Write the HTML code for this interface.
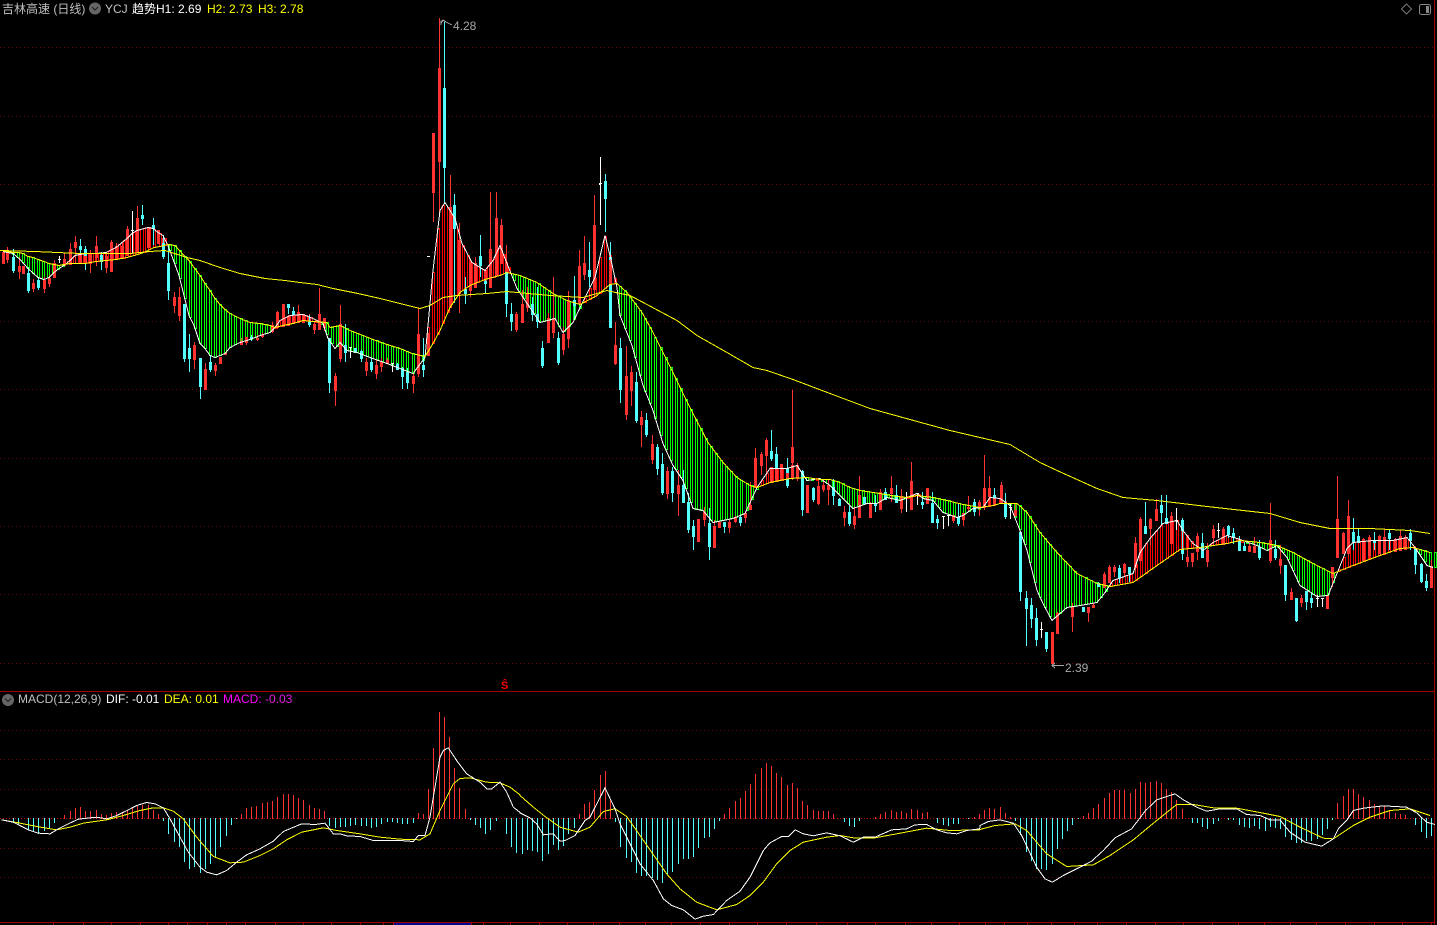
<!DOCTYPE html>
<html><head><meta charset="utf-8"><title>吉林高速 (日线)</title>
<style>
html,body{margin:0;padding:0;background:#000;width:1437px;height:925px;overflow:hidden}
#w{position:relative;width:1437px;height:925px;background:#000;overflow:hidden}
svg{position:absolute;left:0;top:0}
.t{position:absolute;font:12px/14px "Liberation Sans","Noto Sans CJK SC",sans-serif;white-space:pre;color:#c0c0c0}
</style></head><body><div id="w">
<svg id="s" width="1437" height="925" viewBox="0 0 1437 925" shape-rendering="crispEdges" xmlns="http://www.w3.org/2000/svg"></svg>
<div class="t" style="left:2px;top:2px">吉林高速 (日线)</div>
<div class="t" style="left:105px;top:2px">YCJ</div>
<div class="t" style="left:132px;top:2px;color:#fff">趋势H1: 2.69</div>
<div class="t" style="left:207px;top:2px;color:#ff0">H2: 2.73</div>
<div class="t" style="left:258px;top:2px;color:#ff0">H3: 2.78</div>
<div class="t" style="left:453px;top:19px;color:#a8a8a8">4.28</div>
<div class="t" style="left:1065px;top:661px;color:#a8a8a8">2.39</div>
<div class="t" style="left:18px;top:692px">MACD(12,26,9)</div>
<div class="t" style="left:106px;top:692px;color:#fff">DIF: -0.01</div>
<div class="t" style="left:164px;top:692px;color:#ff0">DEA: 0.01</div>
<div class="t" style="left:223px;top:692px;color:#f0f">MACD: <span style="color:#e020e0">-0.03</span></div>
<div class="t" style="left:501px;top:679px;color:#f00;font-size:11px;font-weight:bold">Ŝ</div>
</div>
<script>
var NS="http://www.w3.org/2000/svg",S=document.getElementById("s");
function el(n,a){var e=document.createElementNS(NS,n);for(var k in a)e.setAttribute(k,a[k]);S.appendChild(e);return e}
function line(x1,y1,x2,y2,c,o){var a={x1:x1,y1:y1,x2:x2,y2:y2,stroke:c,"stroke-width":1};if(o)for(var k in o)a[k]=o[k];return el("line",a)}
var RED="#ff3232",CY="#54ffff";

/* grid: individual pixel dots via dash, unsnapped */
var dots={"stroke-dasharray":"1 3","shape-rendering":"geometricPrecision"};
[47.5,116.5,184.5,252.5,321.5,389.5,458.5,526.5,594.5,663.5].forEach(function(y){line(0,y,1434,y,"#640606",dots)});
[730.5,759.5,789.5,848.5,877.5].forEach(function(y){line(0,y,1434,y,"#640606",dots)});
line(0,818.5,1434,818.5,"#b00e0e",{"stroke-dasharray":"1 2","shape-rendering":"geometricPrecision"});
line(0,691.5,1435,691.5,"#a00000");
line(0,922.5,1435,922.5,"#a00000");
line(1434.5,0,1434.5,925,"#a00000");
el("rect",{x:393,y:923,width:78,height:2,fill:"#00008b"});
el("rect",{x:1435,y:552,width:2,height:15,fill:"#00008b"});
[53,83,111,140,168,187,207,226,245,275,303,331,360,383,393,471,483,510,539,567,593,619,645,671,700,729,757,786,816,847,875,905,931,959,985,1004,1027,1051,1074,1097,1126,1155,1183,1212,1238,1264,1290,1316,1345,1374,1402,1431].forEach(function(x){line(x+.5,923,x+.5,925,"#a00000")});

/* ribbon */
function pts(s){return s.trim().split(/\s+/).map(function(p){return p.split(",").map(Number)})}
var F=pts("3,251 13,253 20,259 28,268 38,277 44,279 49,277 54,272 59,268 64,265 70,260 75,255 85,253 96,253 106,252 116,247 127,238 132,233 137,230 148,227 153,228 158,232 163,235 168,245 179,275 189,315 194,325 200,343 205,348 210,355 215,357 225,353 230,347 240,342 250,339 260,335 270,332 275,327 280,320 290,315 303,314 313,318 323,323 328,338 335,348 340,342 347,350 357,352 370,357 387,363 400,368 413,373 425,357 430,303 433,270 440,210 445,202 455,218 462,243 472,262 485,270 493,260 500,245 507,263 517,288 540,322 555,318 563,332 573,322 582,303 595,277 605,235 610,255 617,287 620,315 632,345 643,385 653,410 663,443 673,465 683,480 693,508 703,510 713,522 733,518 745,513 757,487 770,468 787,468 797,465 807,480 820,478 830,485 840,495 853,508 867,503 877,503 887,497 900,500 907,497 917,493 923,498 933,500 943,512 957,517 963,515 973,508 983,507 990,497 1000,498 1010,505 1020,530 1027,550 1037,590 1043,603 1052,620 1067,607 1080,605 1097,602 1105,592 1113,580 1133,573 1140,552 1150,538 1163,523 1177,520 1183,530 1193,543 1203,550 1213,542 1227,535 1237,538 1257,545 1267,550 1277,545 1287,557 1300,585 1317,596 1328,595 1337,573 1347,548 1353,542 1373,540 1393,540 1407,537 1415,547 1427,565 1433,567");
var L=pts("2,250 13,252 18,252 23,253 28,256 33,257 38,259 44,261 49,263 54,264 59,265 64,264 70,263 85,263 96,261 106,260 116,259 127,257 134,255 141,253 148,250 154,247 160,246 168,244 175,245 184,255 189,260 194,267 200,275 205,283 210,290 215,298 220,304 225,309 230,313 240,318 250,322 260,323 270,325 275,327 283,325 293,323 303,320 313,321 327,322 330,327 340,325 350,330 363,335 373,339 387,344 400,348 412,353 425,356 433,343 440,330 450,307 460,292 470,285 485,279 500,275 507,272 520,275 537,282 553,293 567,300 580,304 597,295 610,284 617,283 627,292 642,312 652,330 662,350 673,372 683,393 693,413 708,442 723,462 737,477 750,485 757,487 770,482 790,478 807,477 820,479 830,479 840,482 850,487 860,490 880,493 897,496 907,497 917,495 933,497 947,500 963,504 980,507 993,505 1000,503 1017,503 1027,512 1040,532 1057,552 1077,573 1097,583 1110,586 1133,582 1157,565 1180,549 1200,547 1227,543 1240,540 1260,542 1277,545 1293,552 1313,563 1333,573 1353,565 1380,555 1400,548 1413,547 1430,552");
var M=pts("0,250 35,251 80,253 130,253 150,251 165,250 187,257 200,260 220,267 240,273 250,275 265,278 285,280 300,282 317,284 333,288 358,293 380,298 400,303 420,308 430,305 443,297 457,295 487,293 507,291 517,292 550,295 583,297 607,290 620,293 630,295 647,304 677,320 697,335 727,352 753,367 767,370 793,379 830,393 870,408 950,430 1010,444 1040,462 1057,470 1097,488 1123,497 1157,500 1207,506 1270,513 1300,522 1330,528 1370,528 1410,530 1430,533");
function at(a,x){for(var i=1;i<a.length;i++)if(x<=a[i][0]){var p=a[i-1],q=a[i];return p[1]+(q[1]-p[1])*(x-p[0])/(q[0]-p[0])}return a[a.length-1][1]}
for(var n=2;n<284;n++){var cx=2.7+5.06*n,px=Math.round(cx),fy=at(F,cx),sy=at(L,cx);
 var ty=Math.round(Math.min(fy,sy)),by=Math.round(Math.max(fy,sy));if(by-ty<2)by=ty+2;
 el("rect",{x:px-.5,y:ty+.5,width:2,height:by-ty,fill:"#000",stroke:fy>sy?"#00ff00":"#ff0000","stroke-width":1});}

/* candles */
function cs(ox,oy,d){d.trim().split("|").forEach(function(r){var a=r.trim().split(/\s+/);if(a.length<6)return;
 var t=a[0],x=Math.round(ox+a[1]/3),h=Math.round(oy+a[2]/3),T=Math.round(oy+a[3]/3),B=Math.round(oy+a[4]/3),l=Math.round(oy+a[5]/3);
 var c=t=="r"?RED:t=="c"?CY:"#fff";
 if(l>h)line(x+.5,h,x+.5,l,c);
 if(t=="r"&&B>T)el("rect",{x:x-.5,y:T+.5,width:2,height:B-T,fill:"none",stroke:c,"stroke-width":1});
 if(t=="c"&&B>T)el("rect",{x:x-1,y:T,width:3,height:B-T+1,fill:c});
 if(t=="w")line(x-1,T+.5,x+2,T+.5,c);
})}
cs(0,200,"r 8 155 155 190 190|r 22 142 150 178 188|c 38 148 170 210 218|r 56 170 198 212 238|r 70 198 198 220 220|c 85 200 218 270 278|r 100 238 248 263 275|c 115 230 240 262 270|r 133 230 240 263 278|r 148 225 233 250 260|r 163 180 190 230 230|w 178 168 178 190 190|r 193 160 178 195 195|r 211 130 148 192 192|r 226 108 127 140 190|c 241 118 138 148 160|r 241 160 162 188 188|c 256 138 148 165 210|r 256 168 168 188 188|r 271 150 158 190 218|r 289 108 138 170 198|c 304 155 165 183 210|r 319 155 168 200 218|r 334 120 127 212 212|r 349 130 138 178 178|r 367 130 138 172 172|r 382 78 88 165 165|w 397 32 90 160 160|r 412 18 55 155 155|c 427 15 45 53 75|r 445 82 82 142 142|c 460 55 75 85 135|r 475 90 90 130 130|r 490 105 115 130 130|c 490 105 130 168 178|c 505 135 190 270 300|r 523 275 292 315 340|r 538 262 292 345 362|c 553 312 312 474 486|c 568 402 444 474 516|r 583 426 435 476 508|c 601 474 474 558 596|r 616 490 508 568 568|c 631 465 486 508 516|r 646 488 495 510 528|r 661 470 470 488 488|r 676 455 458 463 463");
cs(230,270,"r 33 205 212 222 225|r 48 200 202 215 225|c 63 195 200 205 213|r 81 195 203 208 213|r 97 190 195 198 205|r 127 155 165 182 190|r 142 123 125 170 172|r 160 102 102 168 168|c 175 102 102 110 132|r 175 135 137 165 165|c 190 112 124 132 160|r 190 135 137 160 162|r 205 105 125 157 158|r 220 132 133 155 155|r 238 132 142 155 158|c 238 135 155 162 172|r 253 155 163 178 192|r 268 55 133 176 178|r 283 145 145 172 182|c 298 205 205 335 368|r 316 310 318 360 408|r 331 105 163 265 275|c 346 162 225 247 275|w 361 232 232 263 263|c 376 235 235 247 247|c 394 240 242 263 275|r 409 265 277 300 318|c 424 265 277 298 305|r 439 270 285 310 327|r 454 265 277 288 305|r 472 265 270 278 280|w 487 278 280 305 305|c 502 280 283 297 297|c 517 290 295 318 358|c 532 295 305 335 358|r 550 310 318 338 368");
cs(400,10,"r 55 895 972 1090 1100|c 70 985 1065 1077 1100|r 85 970 970 1035 1035|r 100 370 370 545 635|r 117 25 175 452 620|c 133 35 235 470 575|r 149 495 590 890 890|c 163 552 585 655 880|r 178 640 690 850 910|c 196 800 837 850 882|r 211 750 755 840 860|r 226 740 760 832 832|c 241 675 738 765 800|r 256 780 780 810 812|c 256 810 812 820 848|r 271 545 718 832 832|r 289 546 625 795 795|r 304 627 645 760 760|r 319 705 755 785 785|c 319 785 785 880 920|c 334 880 912 933 962|r 349 905 912 958 965|r 367 840 883 935 935|r 382 830 850 892 905|c 397 860 882 912 932|c 412 830 912 933 955|c 427 993 1015 1065 1075|r 445 910 925 995 995|r 460 800 925 965 985|c 475 965 985 1055 1065|r 490 950 972 1017 1035|r 505 843 870 985 1015|c 523 798 870 885 930|r 538 720 768 880 885|r 553 678 760 792 810|c 568 697 780 798 830|r 583 555 645 838 865|w 601 440 520 523 645|c 616 492 513 563 665|c 631 695 740 748 800|r 631 745 750 825 825|c 631 822 822 952 952");
cs(610,280,"r 16 125 195 250 255|c 31 175 205 327 370|r 49 198 288 402 420|r 64 258 277 330 378|c 79 275 305 420 430|r 94 392 412 431 500|c 109 400 420 462 470|r 127 465 492 537 552|c 142 492 500 563 585|c 157 520 552 636 645|r 172 560 573 638 657|c 187 562 573 636 665|r 205 570 615 638 708|c 220 570 615 666 670|c 235 640 665 747 760|c 250 720 738 768 810|r 265 717 717 782 782|r 283 680 696 718 738|c 298 685 728 798 840|r 313 720 737 800 800|r 328 725 725 742 745|c 343 725 725 738 760|r 358 720 725 740 760|r 376 708 712 722 730|c 391 705 712 725 738|r 406 700 700 710 728|r 421 605 675 688 690|r 436 505 535 620 620|r 454 515 522 555 585|r 469 475 480 525 600|c 484 450 513 535 542|c 499 500 522 563 585|r 484 560 560 606 606|r 499 563 565 603 606|r 514 552 553 598 598|r 532 540 572 598 602|c 532 535 565 575 575|c 532 598 598 615 623|r 547 330 502 545 600|r 547 555 555 590 590|r 562 548 558 590 603|c 577 570 573 687 707|r 592 615 615 697 697|c 610 620 623 657 665|r 625 595 617 668 675");
cs(820,440,"r 10 118 135 146 155|r 25 118 135 146 195|c 40 118 142 164 195|c 58 175 178 194 194|r 73 198 216 230 258|c 88 198 216 248 258|r 103 200 228 252 267|r 118 108 165 230 230|c 133 170 170 188 190|r 151 185 192 230 230|c 166 165 190 195 215|r 181 148 155 208 208|c 196 145 155 178 178|r 214 108 144 158 186|c 229 135 165 186 186|r 244 148 168 205 218|w 259 155 170 170 215|r 274 66 124 208 208|w 292 158 158 170 195|c 307 155 185 193 207|r 322 145 145 190 193|c 337 155 190 247 250|c 352 225 237 247 267|w 370 228 228 260 267|w 385 225 225 255 258|r 400 225 225 240 250|c 415 190 230 250 257|r 430 220 220 238 258|r 445 168 200 205 215|c 463 178 187 212 228|r 478 180 187 198 228|r 493 45 145 198 210|r 508 108 145 168 198|c 523 145 165 173 198|r 523 175 175 195 198");
cs(1000,470,"r 2 35 45 100 102|c 16 68 100 137 147|w 31 100 110 110 148|r 46 100 120 135 140|c 61 185 185 362 392|c 79 362 385 415 527|c 94 385 405 445 475|c 109 415 445 507 527|w 124 457 478 478 505|c 139 487 487 535 547|r 157 487 487 580 580|r 172 425 430 488 488|r 217 400 410 437 486|c 250 410 412 423 423|r 265 410 410 425 455|r 280 400 405 410 415|c 295 335 340 348 350|r 313 305 312 350 350|r 328 285 290 335 335|r 343 285 290 303 320|c 358 285 293 320 340|r 373 280 283 305 320|c 388 290 292 310 335|r 406 200 220 290 308|r 421 140 148 270 270|c 436 95 168 190 190|r 451 145 148 175 225|r 469 88 118 150 150|c 484 75 105 125 165|c 499 75 145 160 162|r 514 125 138 220 220|w 529 115 150 150 180|c 547 145 150 180 270|c 547 238 238 248 270|r 562 200 262 272 290|r 577 248 250 272 290|r 592 190 198 243 270|c 607 190 218 260 262|r 622 218 240 272 290|r 640 165 178 200 228|w 655 160 180 180 205|r 670 170 178 222 225|c 685 165 168 192 205|c 700 175 190 200 222|c 718 198 212 240 240|c 733 215 228 240 240|r 748 220 228 243 243|r 763 200 228 247 250|c 778 210 230 260 270|r 811 100 210 270 280|c 826 210 238 262 270|r 841 225 268 285 312|c 856 285 285 373 392|r 874 355 365 387 387|c 889 385 385 450 455|r 904 375 385 397 410|c 919 362 362 392 420|c 934 370 385 397 415|w 952 375 385 385 412|w 967 385 385 385 412|r 982 375 375 415 415|r 997 290 292 320 350|r 1012 18 148 260 260|r 1030 185 188 250 250|r 1045 90 138 250 260|c 1060 145 185 212 240|c 1075 175 198 215 215|r 1090 205 207 270 270|r 1108 195 200 255 270|c 1123 185 210 215 240|r 1138 195 198 250 250|r 1153 178 200 250 250|c 1168 178 190 205 240|r 1186 205 208 243 245|r 1201 180 198 240 240|r 1216 195 200 238 240|c 1231 178 188 210 240|c 1246 235 235 282 312|c 1264 280 282 332 340|c 1279 312 332 350 362|r 1294 270 288 352 352");
line(427,256.5,430,256.5,"#fff");line(599,184.5,601,184.5,"#fff");

/* main lines */
function poly(a,c){el("polyline",{points:a.map(function(p){return p[0]+","+(p[1]+.5)}).join(" "),fill:"none",stroke:c,"stroke-width":1})}
poly(F,"#fff");poly(L,"#ff0");poly(M,"#ff0");

/* markers */
el("polyline",{points:"441,23 443,20 446,22 452,25",fill:"none",stroke:"#a8a8a8"});
line(441,20.5,441,25,"#a8a8a8");
line(1052,665.5,1064,665.5,"#a8a8a8");
el("polyline",{points:"1055,663 1052,665.5 1055,668",fill:"none",stroke:"#a8a8a8"});

/* MACD bars */
function mb(ox,oy,zero,d){d.trim().split(/\s+/).forEach(function(p){var a=p.split(",");var x=Math.round(ox+a[0]/3),y=Math.round(oy+a[1]/3),z=Math.round(oy+zero/3);
 line(x+.5,Math.min(y,z),x+.5,Math.max(y,z)+1,y<z?RED:CY)})}
mb(0,670,445,"38,456 55,462 85,478 100,483 115,490 133,480 148,472 163,456 193,435 211,423 226,414 241,410 256,422 271,424 289,420 304,432 319,436 334,430 349,426 367,428 382,420 397,414 412,408 427,404 445,406 460,420 475,432 490,449 505,488 523,513 538,528 553,572 568,594 583,588 601,606 616,595 631,580 646,560 661,527 679,495 694,462 709,444 724,432 739,414 754,410 769,408 787,398 802,396 817,392 832,380 850,372 865,372 880,376 895,384 910,390 928,405 943,413 958,417 973,423 988,465 1006,470 1021,468 1036,467 1051,464 1066,462 1084,465 1099,466 1114,470 1129,468 1144,460 1162,452 1177,452 1192,455 1207,458 1222,460 1240,456 1255,430 1270,432 1285,358 1300,234 1318,126 1333,141 1348,202 1363,294 1378,354 1396,417 1411,446 1426,462 1441,472 1456,488 1471,476 1489,450 1519,488 1534,528 1549,545");
mb(520,700,355,"7,458 22,447 37,450 52,452 67,480 85,458 100,432 115,446 130,434 145,398 163,382 178,343 193,312 208,306 223,270 241,225 256,213 271,300 286,363 301,438 319,470 334,483 349,516 364,525 379,525 397,530 412,537 427,546 442,522 457,513 475,489 490,474 505,473 520,467 535,441 553,411 568,408 583,384 598,360 613,343 628,324 646,303 661,294 676,273 691,252 706,222 724,204 739,189 754,198 769,219 784,231 802,255 817,249 832,264 847,303 862,315 880,330 895,333 910,333 925,333 940,342 973,363 988,375 1003,378 1018,359 1065,352 1080,342 1095,336 1114,330 1129,336 1144,333 1159,339 1174,327 1192,330 1207,339 1222,336 1252,366 1270,372 1285,375 1300,369 1315,369 1345,354 1363,351 1378,342");
mb(980,760,175,"13,150 28,144 43,147 61,141 76,159 91,170 106,180 121,222 139,273 154,300 169,323 184,325 199,328 217,308 232,264 247,234 262,210 277,192 295,174 310,168 325,159 340,144 355,132 373,114 388,100 403,90 418,90 433,90 451,100 466,87 481,66 496,69 511,66 529,63 544,69 559,87 574,96 589,120 607,147 637,186 652,186 667,198 682,204 700,189 715,180 745,177 760,177 778,192 793,198 808,201 823,195 838,204 856,210 871,198 886,201 901,204 916,228 934,236 949,246 964,246 979,240 994,240 1012,234 1027,222 1042,204 1057,177 1072,128 1090,108 1105,87 1120,87 1135,102 1150,111 1168,120 1183,132 1198,138 1213,138 1228,150 1246,159 1261,162 1276,165 1306,192 1324,214 1339,231 1354,225");

/* MACD lines */
function zl(ox,oy,s){return pts(s).map(function(p){return [ox+p[0]/3,oy+p[1]/3]})}
var mw=zl(0,670,"5,448 40,455 85,478 115,488 150,490 175,475 205,460 235,446 290,440 320,445 350,435 385,418 410,405 440,396 465,400 490,412 510,445 540,500 565,545 600,590 620,605 650,613 680,600 710,575 740,553 780,535 820,512 850,483 905,460 945,462 975,458 1000,490 1020,490 1040,496 1080,498 1120,510 1160,510 1200,510 1240,513 1255,495 1275,495 1290,440 1300,380 1320,260 1330,240 1345,232 1370,270 1400,310 1440,335 1460,355 1475,355 1500,335 1520,365 1540,410 1559,425")
 .concat(zl(520,700,"0,337 30,352 50,370 70,403 100,400 120,422 135,420 165,405 195,360 210,350 255,262 285,325 300,370 330,430 360,490 400,540 430,595 455,615 490,628 525,656 550,647 580,642 620,600 660,572 690,530 730,450 750,427 785,408 805,408 825,388 850,400 880,406 920,397 960,406 1000,425 1030,410 1065,410 1115,388 1160,385 1185,373 1220,372 1250,388 1280,397 1310,400 1340,390 1379,385"))
 .concat(zl(980,760,"0,195 25,183 60,178 100,188 125,225 170,320 195,355 217,365 250,345 300,320 335,302 370,270 405,232 455,205 495,152 530,118 585,100 610,118 650,140 680,152 720,145 770,145 800,162 840,165 870,178 900,178 930,215 975,245 1025,257 1060,235 1075,205 1100,180 1120,150 1150,143 1210,136 1280,140 1310,157 1340,185 1365,192"));
var my=zl(0,670,"5,448 60,458 110,468 170,478 210,470 250,458 320,448 370,435 420,420 460,412 490,412 520,422 550,445 590,500 640,558 690,577 730,575 780,555 820,535 860,508 905,485 970,472 1010,480 1080,490 1140,500 1200,506 1260,508 1290,490 1320,420 1360,340 1380,324 1410,322 1460,335 1500,337 1530,350 1559,372")
 .concat(zl(520,700,"0,285 40,320 75,348 120,380 175,395 210,380 250,333 285,325 320,348 360,405 440,520 480,565 530,605 590,628 650,612 690,585 730,545 770,490 810,450 850,425 920,410 960,405 1000,412 1065,412 1130,400 1220,383 1290,390 1379,388"))
 .concat(zl(980,760,"0,207 45,195 105,190 140,210 200,280 260,318 340,313 390,285 460,238 530,180 590,132 640,132 700,142 770,143 850,158 900,168 960,200 1030,233 1060,235 1120,195 1170,170 1230,150 1290,145 1350,165"));
poly(my,"#ff0");poly(mw,"#fff");

/* icons */
function ico(cx,cy){el("circle",{cx:cx,cy:cy,r:6,fill:"#666","shape-rendering":"auto"});
 el("polyline",{points:(cx-3)+","+(cy-1.5)+" "+cx+","+(cy+1.5)+" "+(cx+3)+","+(cy-1.5),fill:"none",stroke:"#222","stroke-width":1.2,"shape-rendering":"auto"})}
ico(95,8.5);ico(8,700);
el("polygon",{points:"1406.5,4 1411.5,9 1406.5,14 1401.5,9",fill:"none",stroke:"#777","shape-rendering":"auto"});
el("rect",{x:1419.5,y:4.5,width:11,height:10,rx:2,fill:"#000",stroke:"#888","stroke-width":1,"shape-rendering":"auto"});
el("rect",{x:1426,y:6,width:3,height:7,fill:"#888"});
</script>
</body></html>
